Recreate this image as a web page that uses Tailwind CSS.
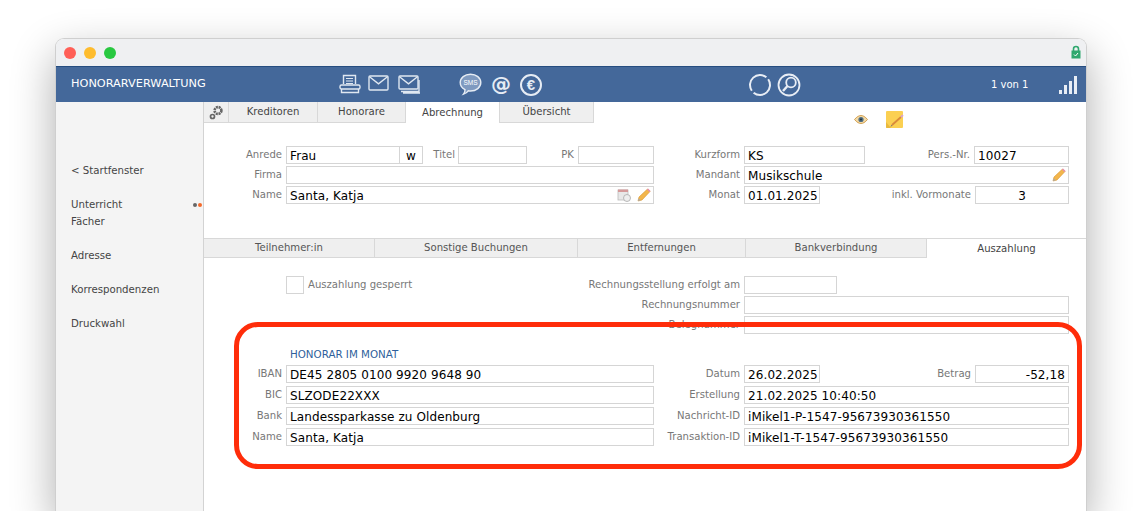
<!DOCTYPE html>
<html lang="de">
<head>
  <meta charset="UTF-8">
  <title>Honorarverwaltung</title>
  <script src="https://cdn.jsdelivr.net/npm/@tailwindcss/browser@4"></script>
</head>
<body class="bg-white h-[511px] overflow-hidden font-['DejaVu_Sans',sans-serif]">
  <div class="ml-[55px] pt-[38px] w-[1032px]">
    <div class="relative h-[473px] rounded-t-[9px] border-x border-t border-[#cfcfcf] bg-white shadow-[0_16px_44px_rgba(0,0,0,0.32)] overflow-hidden flex flex-col">

      <!-- title bar -->
      <div class="h-[27px] shrink-0 bg-[#eff0f2] flex items-center pl-[8px] pr-[5px]">
        <span class="w-[12px] h-[12px] rounded-full bg-[#ff5f57]"></span>
        <span class="w-[12px] h-[12px] rounded-full bg-[#febc2e] ml-[8px]"></span>
        <span class="w-[12px] h-[12px] rounded-full bg-[#28c840] ml-[8px]"></span>
        <svg class="ml-auto mb-[1px]" width="10" height="14" viewBox="0 0 10 14"><path d="M2.500 6V4a2.500 2.500 0 0 1 5 0v2" fill="none" stroke="#2fa86e" stroke-width="1.600"/><rect x="0.500" y="5.500" width="9" height="8" fill="#2fa86e"/><path d="M3 9.500l1.500 1.500 2.500-3" fill="none" stroke="#fff" stroke-width="1"/></svg>
      </div>

      <!-- blue toolbar -->
      <div class="h-[36px] shrink-0 bg-[#44689a] border-t border-[#254d80] flex items-center text-white">
        <span class="w-[283px] pl-[15px] text-[11.300px] whitespace-nowrap">HONORARVERWALTUNG</span>
        <svg width="22" height="21" viewBox="0 0 22 21" fill="none" stroke="#dfe7f1" stroke-width="1.400"><path d="M4.500 10V1.500h12V10"/><path d="M7 4.500h7M7 7h7M7 9.500h7" stroke-width="1"/><rect x="1" y="11" width="20" height="4" rx="1.500" fill="#44689a"/><path d="M2.500 15v3.500h17V15"/></svg>
        <svg class="ml-[7px] mb-[3px]" width="21" height="16" viewBox="0 0 21 16" fill="none" stroke="#dfe7f1" stroke-width="1.400"><rect x="1" y="1" width="19" height="14" rx="1"/><path d="M1.500 1.800l9 7 9-7"/></svg>
        <svg class="ml-[9px]" width="23" height="19" viewBox="0 0 23 19" fill="none" stroke="#dfe7f1" stroke-width="1.400"><rect x="1" y="1" width="19" height="13" rx="1"/><path d="M1.500 1.800l9 7 9-7"/><path d="M3 16.500h18V5M5 18h17"/></svg>
        <svg class="ml-[38px]" width="23" height="23" viewBox="0 0 23 23"><path d="M11.500 1.200c5.800 0 10.300 3.600 10.300 8.400s-4.500 8.400-10.300 8.400c-.8 0-1.600-.1-2.300-.2-1 1.400-2.600 2.700-4.700 3.400 1-1.300 1.500-2.700 1.500-4.500C3 15.100 1.200 12.500 1.200 9.600 1.200 4.800 5.700 1.200 11.500 1.200z" fill="#7f9ac0" stroke="#e6ecf4" stroke-width="1.400"/><text x="11.500" y="12" text-anchor="middle" font-size="6.500" fill="#fff" font-family="Liberation Sans">SMS</text></svg>
        <span class="ml-[8px] w-[22px] text-center text-[20px] leading-none font-semibold text-[#e6ecf4] mb-[2px]">@</span>
        <span class="ml-[8px] w-[22px] h-[22px] rounded-full border-[2.500px] border-[#e6ecf4] flex items-center justify-center text-[15px] font-bold leading-none text-[#e6ecf4] font-['Liberation_Sans']">€</span>
        <svg class="ml-[206px]" width="24" height="24" viewBox="0 0 24 24" fill="none" stroke="#e8edf5" stroke-width="2"><path d="M18.400 4.300A10 10 0 0 0 3.800 17.700"/><path d="M5.600 19.700A10 10 0 0 0 20.200 6.300"/></svg>
        <svg class="ml-[5px]" width="24" height="24" viewBox="0 0 24 24" fill="none" stroke="#e8edf5"><circle cx="12" cy="12" r="10.500" stroke-width="1.800"/><circle cx="14" cy="9.500" r="4.800" stroke-width="1.800"/><path d="M10.500 13L6 18" stroke-width="2.400"/></svg>
        <span class="ml-[190px] text-[10px] whitespace-nowrap">1 von 1</span>
        <div class="ml-[31px] flex items-end gap-[2px] h-[18px]">
          <span class="w-[3px] h-[4px] bg-[#e8edf5]"></span>
          <span class="w-[3px] h-[9px] bg-[#e8edf5]"></span>
          <span class="w-[3px] h-[13px] bg-[#e8edf5]"></span>
          <span class="w-[3px] h-[18px] bg-[#e8edf5]"></span>
        </div>
      </div>

      <div class="flex flex-1">
        <!-- sidebar -->
        <div class="w-[148px] shrink-0 bg-[#f4f4f4] border-r border-[#d3d3d3] pt-[60px] pl-[15px] text-[10.200px] text-[#444] leading-[17px]">
          <div>&lt; Startfenster</div>
          <div class="mt-[17px] flex items-center justify-between">
            <span>Unterricht</span>
            <span class="flex gap-[1px] mr-[1px]">
              <i class="w-[4px] h-[4px] rounded-full bg-[#666]"></i>
              <i class="w-[4px] h-[4px] rounded-full bg-[#f4692a]"></i>
            </span>
          </div>
          <div>Fächer</div>
          <div class="mt-[17px]">Adresse</div>
          <div class="mt-[17px]">Korrespondenzen</div>
          <div class="mt-[17px]">Druckwahl</div>
        </div>

        <!-- content -->
        <div class="relative flex-1 min-w-0 bg-white text-[10.100px] text-[#777]">
          <!-- top tabs -->
          <div class="h-[21px] flex text-[#444]">
            <div class="w-[25px] bg-[#efefef] border-r border-b border-[#d8d8d8] flex items-center justify-center">
              <svg width="14" height="15" viewBox="0 0 14 15"><circle cx="9" cy="5.500" r="3.400" fill="none" stroke="#666" stroke-width="2.600" stroke-dasharray="2 .7"/><circle cx="3.500" cy="11.500" r="2" fill="none" stroke="#666" stroke-width="1.700"/></svg>
            </div>
            <div class="w-[89px] bg-[#efefef] border-r border-b border-[#d8d8d8] flex items-center justify-center">Kreditoren</div>
            <div class="w-[88px] bg-[#efefef] border-r border-b border-[#d8d8d8] flex items-center justify-center">Honorare</div>
            <div class="w-[93px] bg-white flex items-center justify-center">Abrechnung</div>
            <div class="w-[95px] bg-[#efefef] border-x border-b border-[#d8d8d8] flex items-center justify-center">Übersicht</div>
            <svg class="ml-[260px] mt-[13px]" width="14" height="9" viewBox="0 0 14 9"><path d="M0.500 4.500C3 1.500 5 .5 7 .5s4 1 6.500 4C11 7.500 9 8.500 7 8.500s-4-1-6.500-4z" fill="#f2d9a6" stroke="#c98f35" stroke-width=".8"/><circle cx="7" cy="4.500" r="2.600" fill="#4f6d80"/><circle cx="7" cy="4.500" r="1" fill="#1f2f3a"/></svg>
            <svg class="ml-[18px] mt-[9px]" width="18" height="18" viewBox="0 0 18 18"><rect width="17" height="17" rx="1" fill="#fbd052"/><path d="M0 11l5 6H1a1 1 0 0 1-1-1z" fill="#e9b93d"/><path d="M6 14L15 6" stroke="#d98a3a" stroke-width="1.800"/><path d="M15 6l2-1.800" stroke="#d9a2d0" stroke-width="1.800"/><path d="M6 14l-1 1.500" stroke="#777" stroke-width="1"/></svg>
          </div>

          <!-- head form -->
          <div class="mt-[23px] flex flex-col gap-[2px]">
            <div class="flex h-[18px] items-center">
              <label class="w-[78px] text-right">Anrede</label>
              <div class="ml-[4px] w-[114px] h-full border border-[#d5d5d5] px-[3px] pt-[1px] text-[12px] tracking-[0.1px] text-black flex items-center">Frau</div>
              <div class="w-[23px] h-full border border-l-0 border-[#d5d5d5] pt-[1px] text-[12px] tracking-[0.1px] text-black flex items-center justify-center">w</div>
              <label class="w-[32px] text-right">Titel</label>
              <div class="ml-[3px] w-[69px] h-full border border-[#d5d5d5]"></div>
              <label class="w-[47px] text-right">PK</label>
              <div class="ml-[4px] w-[76px] h-full border border-[#d5d5d5]"></div>
              <label class="w-[86px] text-right">Kurzform</label>
              <div class="ml-[4px] w-[121px] h-full border border-[#d5d5d5] px-[3px] pt-[1px] text-[12px] tracking-[0.1px] text-black flex items-center">KS</div>
              <label class="w-[105px] text-right">Pers.-Nr.</label>
              <div class="ml-[4px] w-[95px] h-full border border-[#d5d5d5] px-[3px] pt-[1px] text-[12px] tracking-[0.1px] text-black flex items-center">10027</div>
            </div>
            <div class="flex h-[18px] items-center">
              <label class="w-[78px] text-right">Firma</label>
              <div class="ml-[4px] w-[368px] h-full border border-[#d5d5d5]"></div>
              <label class="w-[86px] text-right">Mandant</label>
              <div class="ml-[4px] w-[325px] h-full border border-[#d5d5d5] px-[3px] pt-[1px] text-[12px] tracking-[0.1px] text-black flex items-center justify-between">
                Musikschule
                <svg class="mb-[1px] -mr-[1px]" width="14" height="14" viewBox="0 0 14 14"><path d="M1 13l1-4L10.500 1 13 3.500 5 12z" fill="#f3b64c" stroke="#d9962e" stroke-width=".6"/><path d="M10.500 1L13 3.500" stroke="#e58fb0" stroke-width="1.600"/><path d="M1 13l.7-2.700 2 2z" fill="#aaa"/></svg>
              </div>
            </div>
            <div class="flex h-[18px] items-center">
              <label class="w-[78px] text-right">Name</label>
              <div class="ml-[4px] w-[368px] h-full border border-[#d5d5d5] px-[3px] pt-[1px] text-[12px] tracking-[0.1px] text-black flex items-center">
                <span class="flex-1">Santa, Katja</span>
                <svg class="mb-[1px]" width="14" height="14" viewBox="0 0 14 14"><rect x="1" y="2" width="10" height="10" fill="#e8e8e8" stroke="#bbb" stroke-width=".8"/><rect x="1" y="1.500" width="10" height="2.500" fill="#d59a9a"/><circle cx="10" cy="10" r="3.500" fill="#eee" stroke="#aaa" stroke-width=".8"/></svg>
                <svg class="ml-[6px] mb-[1px] -mr-[1px]" width="14" height="14" viewBox="0 0 14 14"><path d="M1 13l1-4L10.500 1 13 3.500 5 12z" fill="#f3b64c" stroke="#d9962e" stroke-width=".6"/><path d="M10.500 1L13 3.500" stroke="#e58fb0" stroke-width="1.600"/><path d="M1 13l.7-2.700 2 2z" fill="#aaa"/></svg>
              </div>
              <label class="w-[86px] text-right">Monat</label>
              <div class="ml-[4px] w-[76px] h-full border border-[#d5d5d5] px-[3px] pt-[1px] text-[12px] tracking-[0.1px] text-black flex items-center">01.01.2025</div>
              <label class="w-[151px] text-right">inkl. Vormonate</label>
              <div class="ml-[4px] w-[94px] h-full border border-[#d5d5d5] pt-[1px] text-[12px] tracking-[0.1px] text-black flex items-center justify-center">3</div>
            </div>
          </div>

          <!-- sub tabs -->
          <div class="mt-[34px] h-[20px] flex border-t border-[#d8d8d8] text-[#555]">
            <div class="w-[171px] bg-[#efefef] border-r border-b border-[#d8d8d8] flex items-center justify-center">Teilnehmer:in</div>
            <div class="w-[203px] bg-[#efefef] border-r border-b border-[#d8d8d8] flex items-center justify-center">Sonstige Buchungen</div>
            <div class="w-[168px] bg-[#efefef] border-r border-b border-[#d8d8d8] flex items-center justify-center">Entfernungen</div>
            <div class="w-[181px] bg-[#efefef] border-r border-b border-[#d8d8d8] flex items-center justify-center">Bankverbindung</div>
            <div class="flex-1 flex items-center justify-center text-[#444]">Auszahlung</div>
          </div>

          <!-- payout form -->
          <div class="mt-[18px] flex flex-col gap-[2px]">
            <div class="flex h-[18px] items-center">
              <div class="ml-[82px] w-[18px] h-full border border-[#d5d5d5]"></div>
              <label class="ml-[4px] w-[432px] flex justify-between whitespace-nowrap">
                <span>Auszahlung gesperrt</span><span>Rechnungsstellung erfolgt am</span>
              </label>
              <div class="ml-[4px] w-[93px] h-full border border-[#d5d5d5]"></div>
            </div>
            <div class="flex h-[18px] items-center">
              <label class="w-[536px] text-right">Rechnungsnummer</label>
              <div class="ml-[4px] w-[325px] h-full border border-[#d5d5d5]"></div>
            </div>
            <div class="flex h-[18px] items-center">
              <label class="w-[536px] text-right">Belegnummer</label>
              <div class="ml-[4px] w-[325px] h-full border border-[#d5d5d5]"></div>
            </div>
          </div>

          <div class="mt-[12px] ml-[86px] h-[17px] text-[10.300px] leading-[17px] text-[#2f5f9b]">HONORAR IM MONAT</div>

          <div class="mt-[2px] flex flex-col gap-[3px]">
            <div class="flex h-[18px] items-center">
              <label class="w-[78px] text-right">IBAN</label>
              <div class="ml-[4px] w-[368px] h-full border border-[#d5d5d5] px-[3px] pt-[1px] text-[12px] tracking-[0.1px] text-black flex items-center">DE45 2805 0100 9920 9648 90</div>
              <label class="w-[86px] text-right">Datum</label>
              <div class="ml-[4px] w-[76px] h-full border border-[#d5d5d5] px-[3px] pt-[1px] text-[12px] tracking-[0.1px] text-black flex items-center">26.02.2025</div>
              <label class="w-[151px] text-right">Betrag</label>
              <div class="ml-[4px] w-[94px] h-full border border-[#d5d5d5] px-[3px] pt-[1px] text-[12px] tracking-[0.1px] text-black flex items-center justify-end">-52,18</div>
            </div>
            <div class="flex h-[18px] items-center">
              <label class="w-[78px] text-right">BIC</label>
              <div class="ml-[4px] w-[368px] h-full border border-[#d5d5d5] px-[3px] pt-[1px] text-[12px] tracking-[0.1px] text-black flex items-center">SLZODE22XXX</div>
              <label class="w-[86px] text-right">Erstellung</label>
              <div class="ml-[4px] w-[325px] h-full border border-[#d5d5d5] px-[3px] pt-[1px] text-[12px] tracking-[0.1px] text-black flex items-center">21.02.2025 10:40:50</div>
            </div>
            <div class="flex h-[18px] items-center">
              <label class="w-[78px] text-right">Bank</label>
              <div class="ml-[4px] w-[368px] h-full border border-[#d5d5d5] px-[3px] pt-[1px] text-[12px] tracking-[0.1px] text-black flex items-center">Landessparkasse zu Oldenburg</div>
              <label class="w-[86px] text-right">Nachricht-ID</label>
              <div class="ml-[4px] w-[325px] h-full border border-[#d5d5d5] px-[3px] pt-[1px] text-[12px] tracking-[0.1px] text-black flex items-center">iMikel1-P-1547-95673930361550</div>
            </div>
            <div class="flex h-[18px] items-center">
              <label class="w-[78px] text-right">Name</label>
              <div class="ml-[4px] w-[368px] h-full border border-[#d5d5d5] px-[3px] pt-[1px] text-[12px] tracking-[0.1px] text-black flex items-center">Santa, Katja</div>
              <label class="w-[86px] text-right whitespace-nowrap">Transaktion-ID</label>
              <div class="ml-[4px] w-[325px] h-full border border-[#d5d5d5] px-[3px] pt-[1px] text-[12px] tracking-[0.1px] text-black flex items-center">iMikel1-T-1547-95673930361550</div>
            </div>
          </div>

          <!-- red annotation frame -->
          <div class="absolute left-[30px] top-[220px] w-[848px] h-[147px] rounded-[24px] border-[5px] border-[#ff2d0a]"></div>
        </div>
      </div>
    </div>
  </div>
</body>
</html>
